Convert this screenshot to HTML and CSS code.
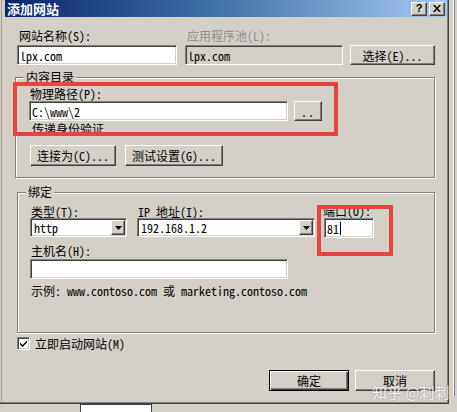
FILE: index.html
```html
<!DOCTYPE html>
<html lang="zh-CN">
<head>
    <meta charset="UTF-8">
    <title>添加网站</title>
    <link rel="stylesheet" href="styles.css">
</head>
<body>
    <div class="desktop">
        <div class="screen-row">
            <div class="dialog">
                <div class="titlebar">
                    <span class="title">添加网站</span>
                    <div class="caption-btns">
                        <span class="cap-btn help">?</span>
                        <span class="cap-btn close">
                            <svg width="8" height="7" viewBox="0 0 8 7"><path d="M0 0h2l2 2.5L6 0h2L5 3.5 8 7H6L4 4.5 2 7H0l3-3.5z" fill="#000"/></svg>
                        </span>
                    </div>
                </div>

                <div class="dialog-body">
                    <!-- Namn och programpool -->
                    <div class="site-grid">
                        <div class="lbl">网站名称(S):</div>
                        <div class="lbl disabled">应用程序池(L):</div>
                        <div></div>
                        <div class="field w160">lpx.com</div>
                        <div class="field readonly w158">lpx.com</div>
                        <button class="btn w85">选择(E)...</button>
                    </div>

                    <div class="group content-group">
                        <span class="group-title">内容目录</span>
                        <div class="lbl">物理路径(P):</div>
                        <div class="path-row">
                            <div class="field path-field">C:\www\2</div>
                            <button class="btn dots">..</button>
                        </div>
                        <div class="lbl pass-lbl">传递身份验证</div>
                        <div class="btn-row">
                            <button class="btn w86">连接为(C)...</button>
                            <button class="btn w98">测试设置(G)...</button>
                        </div>
                    </div>

                    <div class="group binding-group">
                        <span class="group-title">绑定</span>
                        <div class="binding-grid">
                            <div class="lbl">类型(T):</div>
                            <div class="lbl">IP 地址(I):</div>
                            <div class="lbl port-lbl">端口(O):</div>
                            <div class="field select w97">
                                <span class="select-value">http</span>
                                <span class="select-arrow"><svg width="7" height="4" viewBox="0 0 7 4"><path d="M0 0h7L3.5 4z" fill="#000"/></svg></span>
                            </div>
                            <div class="field select w178">
                                <span class="select-value">192.168.1.2</span>
                                <span class="select-arrow"><svg width="7" height="4" viewBox="0 0 7 4"><path d="M0 0h7L3.5 4z" fill="#000"/></svg></span>
                            </div>
                            <div class="field w50">81<span class="caret"></span></div>
                        </div>
                        <div class="lbl host-lbl">主机名(H):</div>
                        <div class="field host-field"></div>
                        <div class="lbl example">示例: www.contoso.com 或 marketing.contoso.com</div>
                    </div>

                    <div class="check-row">
                        <span class="checkbox">
                            <svg width="9" height="9" viewBox="0 0 9 9"><path d="M1 3.5l2.5 2.5L8 1.5v2L3.5 8 1 5.5z" fill="#000"/></svg>
                        </span>
                        <span class="check-text">立即启动网站(M)</span>
                    </div>

                    <div class="footer">
                        <button class="btn default w80">确定</button>
                        <button class="btn w80">取消</button>
                    </div>
                </div>
            </div>
            <div class="side">
                <div class="side-line"></div>
            </div>
        </div>
        <div class="bottom-strip">
            <div class="taskbox"></div>
        </div>

        <!-- Markeringar ovanpå -->
        <div class="mark mark-path"></div>
        <div class="mark mark-port"></div>
        <div class="watermark">知乎 @刺刺</div>
    </div>
</body>
</html>
```

FILE: styles.css
```css
/* Grund */
* {
    box-sizing: border-box;
}

body {
    margin: 0;
    background: #d4d0c8;
    font-family: "Noto Sans Mono CJK SC", "Noto Sans CJK SC", "Liberation Mono", monospace;
    font-size: 12px;
    line-height: 13px;
    color: #000;
}

.desktop {
    position: relative;
    width: 457px;
    height: 412px;
    overflow: hidden;
}

.screen-row {
    display: flex;
    height: 404px;
}

/* Dialogfönster */
.dialog {
    width: 449px;
    height: 404px;
    padding: 0 1px 0 5px;
    border-right: 1px solid #404040;
    border-bottom: 1px solid #404040;
    box-shadow: inset -1px -1px 0 #808080, inset 1px 0 0 #d4d0c8, inset 2px 0 0 #a19d95;
}

.titlebar {
    height: 17px;
    display: flex;
    align-items: center;
    justify-content: space-between;
    padding: 0 2px;
    background: linear-gradient(90deg, #0a246a, #3a6ea5 45%, #a6caf0);
}

.title {
    color: #fff;
    font-family: "Noto Sans CJK SC", sans-serif;
    font-weight: bold;
    font-size: 13px;
    line-height: 15px;
}

.caption-btns {
    display: flex;
    gap: 2px;
}

.cap-btn {
    width: 16px;
    height: 14px;
    display: flex;
    align-items: center;
    justify-content: center;
    background: #d4d0c8;
    border: 1px solid;
    border-color: #fff #404040 #404040 #fff;
    box-shadow: inset -1px -1px 0 #808080;
}

.help {
    font-family: "Liberation Sans", sans-serif;
    font-weight: bold;
    font-size: 11px;
    line-height: 11px;
}

.dialog-body {
    padding: 12px 12px 0 12px;
}

/* Etiketter och fält */
.lbl {
    padding-left: 2px;
    white-space: nowrap;
}

.lbl.disabled {
    color: #8d8a84;
}

.field {
    height: 20px;
    padding: 0 2px;
    display: flex;
    align-items: center;
    background: #fff;
    border: 1px solid;
    border-color: #808080 #fff #fff #808080;
    box-shadow: inset 1px 1px 0 #404040, inset -1px -1px 0 #d4d0c8;
    white-space: nowrap;
}

.field.readonly {
    background: #d4d0c8;
}

.btn {
    height: 20px;
    padding: 0;
    font: inherit;
    color: #000;
    background: #d4d0c8;
    border: 1px solid;
    border-color: #fff #404040 #404040 #fff;
    box-shadow: inset -1px -1px 0 #808080;
    white-space: nowrap;
}

.btn.default {
    border-color: #000;
    box-shadow: inset 1px 1px 0 #fff, inset -1px -1px 0 #404040, inset -2px -2px 0 #808080;
}

.w50 { width: 50px; }
.w80 { width: 80px; height: 21px; }
.w85 { width: 85px; }
.w86 { width: 86px; height: 21px; }
.w97 { width: 97px; }
.w98 { width: 98px; height: 21px; }
.w158 { width: 158px; }
.w160 { width: 160px; }
.w178 { width: 178px; }

.site-grid {
    display: grid;
    grid-template-columns: 168px 165px 85px;
    row-gap: 3px;
}

/* Grupprutor */
.group {
    position: relative;
    border: 1px solid #808080;
    box-shadow: inset 1px 1px 0 #fff, 1px 1px 0 #fff;
}

.group-title {
    position: absolute;
    top: -8px;
    left: 8px;
    padding: 0 2px;
    background: #d4d0c8;
}

.content-group {
    margin: 12px 0 0 -2px;
    padding: 9px 0 11px 13px;
}

.content-group .lbl {
    padding-left: 1px;
}

.path-row {
    display: flex;
    gap: 6px;
    margin-top: 1px;
}

.path-field {
    width: 259px;
}

.dots {
    width: 28px;
    letter-spacing: 1px;
}

.content-group .pass-lbl {
    padding-left: 3px;
    margin-top: 1px;
}

.btn-row {
    display: flex;
    gap: 9px;
    margin: 10px 0 0 1px;
}

.binding-group {
    margin-top: 14px;
    padding: 13px 0 35px 12px;
}

.binding-grid {
    display: grid;
    grid-template-columns: 107px 187px 50px;
    grid-template-rows: 12px 19px;
}

.binding-grid .lbl {
    padding-left: 1px;
    line-height: 12px;
}

.binding-grid .port-lbl {
    margin-top: -1px;
    padding-left: 0;
    margin-left: -1px;
}

.select {
    height: 19px;
    padding: 1px;
    justify-content: space-between;
}

.select-value {
    padding-left: 2px;
}

.select-arrow {
    width: 14px;
    height: 15px;
    display: flex;
    align-items: center;
    justify-content: center;
    background: #d4d0c8;
    border: 1px solid;
    border-color: #fff #404040 #404040 #fff;
    box-shadow: inset -1px -1px 0 #808080;
}

.caret {
    width: 1px;
    height: 13px;
    margin-left: 1px;
    background: #000;
}

.host-lbl {
    margin-top: 7px;
    padding-left: 1px;
}

.host-field {
    width: 258px;
    margin-top: 2px;
}

.example {
    margin-top: 5px;
    padding-left: 1px;
}

/* Kryssruta */
.check-row {
    display: flex;
    align-items: center;
    gap: 5px;
    margin-top: 4px;
}

.checkbox {
    width: 13px;
    height: 13px;
    display: flex;
    align-items: center;
    justify-content: center;
    background: #fff;
    border: 1px solid;
    border-color: #808080 #fff #fff #808080;
    box-shadow: inset 1px 1px 0 #404040, inset -1px -1px 0 #d4d0c8;
}

.footer {
    display: flex;
    justify-content: flex-end;
    gap: 6px;
    margin-top: 20px;
}

/* Bakgrund runt dialogen */
.side {
    flex: 1;
    padding-left: 4px;
}

.side-line {
    width: 2px;
    height: 396px;
    border-left: 1px solid #fff;
    border-right: 1px solid #808080;
}

.bottom-strip {
    height: 8px;
    padding-left: 80px;
}

.taskbox {
    width: 72px;
    height: 8px;
    background: #fff;
    border: 1px solid #404040;
    border-bottom: none;
}

/* Röda markeringar och vattenstämpel */
.mark {
    position: absolute;
    border: 4px solid #e8443f;
}

.mark-path {
    left: 13px;
    top: 82px;
    width: 325px;
    height: 54px;
}

.mark-port {
    left: 317px;
    top: 205px;
    width: 76px;
    height: 51px;
}

.watermark {
    position: absolute;
    left: 372px;
    top: 383px;
    font-family: "Noto Sans CJK SC", sans-serif;
    font-size: 15px;
    line-height: 18px;
    color: rgba(255, 255, 255, 0.9);
    text-shadow: 0 0 2px rgba(0, 0, 0, 0.35);
    white-space: nowrap;
}
```
